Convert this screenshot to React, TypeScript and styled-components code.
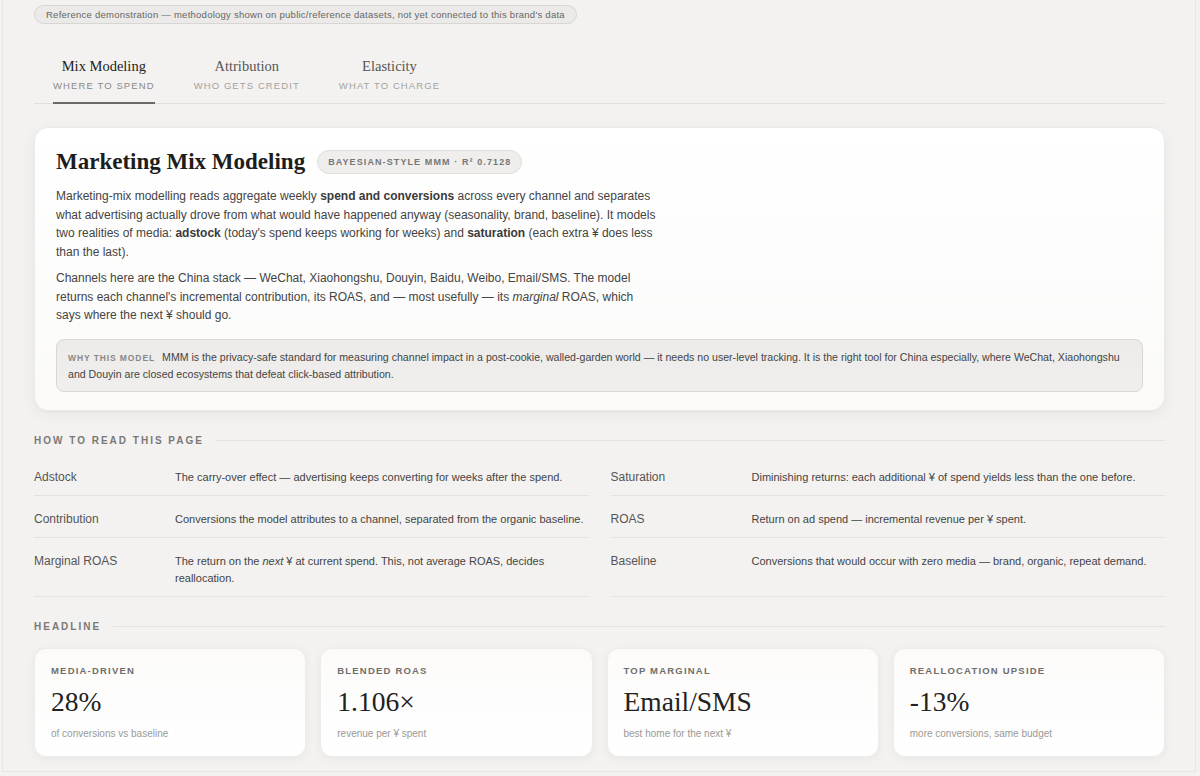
import React from "react";
import styled, { createGlobalStyle } from "styled-components";

const GlobalStyle = createGlobalStyle`
  html, body { margin: 0; padding: 0; background: #f3f2f0; }
  body { font-family: "Liberation Sans", Arial, sans-serif; color: #333; }
  * { box-sizing: border-box; }
`;

const Frame = styled.div`
  margin: 0 4px 4px 2px;
  border: 1px solid #e9e7e4;
  border-top: none;
  min-height: 772px;
  padding: 4px 30px 14px 31px;
`;

const Disclaimer = styled.div`
  display: inline-block;
  font-size: 9.5px;
  letter-spacing: 0.25px;
  color: #666;
  background: #ebeae8;
  border: 1px solid #d8d6d2;
  border-radius: 999px;
  padding: 3px 11px;
  line-height: 11px;
`;

const TabBar = styled.div`
  display: flex;
  gap: 39px;
  padding-left: 19px;
  margin-top: 33px;
  border-bottom: 1px solid #e2e0dc;
`;

const Tab = styled.div<{ $active?: boolean }>`
  display: flex;
  flex-direction: column;
  align-items: center;
  padding: 0 0 10px;
  border-bottom: 2px solid ${(p) => (p.$active ? "#6b6a67" : "transparent")};
  margin-bottom: -1px;
`;

const TabTitle = styled.div<{ $active?: boolean }>`
  font-family: "Liberation Serif", "Times New Roman", serif;
  font-size: 14.5px;
  color: ${(p) => (p.$active ? "#222" : "#555")};
  line-height: 18px;
`;

const TabSub = styled.div<{ $active?: boolean }>`
  font-size: 9.5px;
  letter-spacing: 1.1px;
  color: ${(p) => (p.$active ? "#8a8986" : "#a3a29f")};
  margin-top: 5px;
  line-height: 12px;
`;

const Card = styled.section`
  margin-top: 23px;
  background: linear-gradient(180deg, #ffffff 0%, #fbfaf9 100%);
  border: 1px solid #eceae7;
  border-radius: 14px;
  box-shadow: 0 1px 2px rgba(0, 0, 0, 0.03), 0 4px 16px rgba(0, 0, 0, 0.05);
  padding: 21px 21px 18px;
`;

const HeadRow = styled.div`
  display: flex;
  align-items: center;
  gap: 12px;
`;

const H1 = styled.h1`
  margin: 0;
  font-family: "Liberation Serif", "Times New Roman", serif;
  font-weight: 700;
  font-size: 23px;
  color: #1d1d1d;
  line-height: 26px;
`;

const Badge = styled.span`
  font-size: 9px;
  font-weight: 700;
  letter-spacing: 1.1px;
  color: #777;
  background: #efeeec;
  border: 1px solid #e0deda;
  border-radius: 999px;
  padding: 6px 10px;
  line-height: 10px;
`;

const Para = styled.p`
  margin: 12px 0 0;
  max-width: 600px;
  font-size: 12px;
  line-height: 18.5px;
  color: #444;
  & + & { margin-top: 8px; }
  b { font-weight: 700; color: #3a3a3a; }
`;

const WhyBox = styled.div`
  margin-top: 14px;
  background: linear-gradient(180deg, #ecebe9 0%, #f0efed 100%);
  border: 1px solid #d9d7d3;
  border-radius: 8px;
  padding: 9px 10px 9px 11px;
  font-size: 10.6px;
  line-height: 16px;
  color: #444;
`;

const WhyLabel = styled.span`
  font-size: 8.5px;
  font-weight: 700;
  letter-spacing: 0.9px;
  color: #888;
  margin-right: 7px;
`;

const SectionHead = styled.div<{ $top: number }>`
  display: flex;
  align-items: center;
  gap: 12px;
  margin-top: ${(p) => p.$top}px;
  font-size: 10px;
  font-weight: 700;
  letter-spacing: 2px;
  color: #7a7976;
  line-height: 12px;
  &::after {
    content: "";
    flex: 1;
    height: 1px;
    background: #e4e2df;
  }
`;

const Glossary = styled.div`
  display: grid;
  grid-template-columns: 1fr 1fr;
  column-gap: 22px;
  margin-top: 7px;
`;

const GRow = styled.div`
  display: grid;
  grid-template-columns: 141px 1fr;
  padding: 15px 0 9px;
  border-bottom: 1px solid #e4e2df;
  line-height: 17px;
`;

const Term = styled.div`
  font-size: 12px;
  color: #555;
`;

const Def = styled.div`
  font-size: 11px;
  color: #444;
`;

const KpiGrid = styled.div`
  display: grid;
  grid-template-columns: repeat(4, 1fr);
  gap: 14px;
  margin-top: 15px;
`;

const Kpi = styled.div`
  background: linear-gradient(180deg, #fcfbfa 0%, #ffffff 100%);
  border: 1px solid #eeece9;
  border-radius: 12px;
  box-shadow: 0 2px 10px rgba(0, 0, 0, 0.05);
  padding: 16px 16px 17px;
  height: 109px;
`;

const KpiLabel = styled.div`
  font-size: 9.5px;
  font-weight: 700;
  letter-spacing: 1.2px;
  color: #6f6e6b;
  line-height: 12px;
`;

const KpiValue = styled.div`
  font-family: "Liberation Serif", "Times New Roman", serif;
  font-size: 27.5px;
  color: #222;
  line-height: 30px;
  margin-top: 10px;
`;

const KpiSub = styled.div`
  font-size: 10px;
  color: #9a9996;
  margin-top: 11px;
  line-height: 12px;
`;

const tabs = [
  { t: "Mix Modeling", s: "WHERE TO SPEND", a: true },
  { t: "Attribution", s: "WHO GETS CREDIT" },
  { t: "Elasticity", s: "WHAT TO CHARGE" },
];

const glossary: [string, React.ReactNode][] = [
  ["Adstock", "The carry-over effect — advertising keeps converting for weeks after the spend."],
  ["Saturation", "Diminishing returns: each additional ¥ of spend yields less than the one before."],
  ["Contribution", "Conversions the model attributes to a channel, separated from the organic baseline."],
  ["ROAS", "Return on ad spend — incremental revenue per ¥ spent."],
  [
    "Marginal ROAS",
    <>
      The return on the <i>next</i> ¥ at current spend. This, not average ROAS, decides reallocation.
    </>,
  ],
  ["Baseline", "Conversions that would occur with zero media — brand, organic, repeat demand."],
];

const kpis = [
  { l: "MEDIA-DRIVEN", v: "28%", s: "of conversions vs baseline" },
  { l: "BLENDED ROAS", v: "1.106×", s: "revenue per ¥ spent" },
  { l: "TOP MARGINAL", v: "Email/SMS", s: "best home for the next ¥" },
  { l: "REALLOCATION UPSIDE", v: "-13%", s: "more conversions, same budget" },
];

export default function App() {
  return (
    <>
      <GlobalStyle />
      <Frame>
        <Disclaimer>
          Reference demonstration — methodology shown on public/reference datasets, not yet connected to this brand's data
        </Disclaimer>
        <TabBar>
          {tabs.map((t) => (
            <Tab key={t.t} $active={t.a}>
              <TabTitle $active={t.a}>{t.t}</TabTitle>
              <TabSub $active={t.a}>{t.s}</TabSub>
            </Tab>
          ))}
        </TabBar>
        <Card>
          <HeadRow>
            <H1>Marketing Mix Modeling</H1>
            <Badge>BAYESIAN-STYLE MMM · R² 0.7128</Badge>
          </HeadRow>
          <Para>
            Marketing-mix modelling reads aggregate weekly <b>spend and conversions</b> across every channel and
            separates what advertising actually drove from what would have happened anyway (seasonality, brand,
            baseline). It models two realities of media: <b>adstock</b> (today's spend keeps working for weeks) and{" "}
            <b>saturation</b> (each extra ¥ does less than the last).
          </Para>
          <Para>
            Channels here are the China stack — WeChat, Xiaohongshu, Douyin, Baidu, Weibo, Email/SMS. The model returns
            each channel's incremental contribution, its ROAS, and — most usefully — its <i>marginal</i> ROAS, which
            says where the next ¥ should go.
          </Para>
          <WhyBox>
            <WhyLabel>WHY THIS MODEL</WhyLabel>
            MMM is the privacy-safe standard for measuring channel impact in a post-cookie, walled-garden world — it
            needs no user-level tracking. It is the right tool for China especially, where WeChat, Xiaohongshu and
            Douyin are closed ecosystems that defeat click-based attribution.
          </WhyBox>
        </Card>
        <SectionHead $top={24}>HOW TO READ THIS PAGE</SectionHead>
        <Glossary>
          {glossary.map(([k, d]) => (
            <GRow key={k}>
              <Term>{k}</Term>
              <Def>{d}</Def>
            </GRow>
          ))}
        </Glossary>
        <SectionHead $top={24}>HEADLINE</SectionHead>
        <KpiGrid>
          {kpis.map((k) => (
            <Kpi key={k.l}>
              <KpiLabel>{k.l}</KpiLabel>
              <KpiValue>{k.v}</KpiValue>
              <KpiSub>{k.s}</KpiSub>
            </Kpi>
          ))}
        </KpiGrid>
      </Frame>
    </>
  );
}
